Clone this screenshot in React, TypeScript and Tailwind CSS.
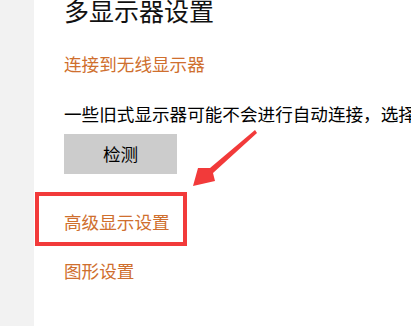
const cjk = { fontFamily: '"Microsoft YaHei", "Noto Sans CJK SC", sans-serif' };

export default function App() {
  return (
    <div className="relative flex h-screen w-full overflow-hidden bg-white" style={cjk}>
      <aside className="w-[34px] shrink-0 bg-[#f2f2f2]" />
      <main className="flex flex-col pl-[30px] text-black">
        <h1 className="h-[20px] whitespace-nowrap text-[25px] font-normal leading-[20px] text-[#111]">
          多显示器设置
        </h1>
        <a className="mt-[32px] h-[24px] whitespace-nowrap text-[17.6px] leading-[24px] text-[#cf6f2e]">
          连接到无线显示器
        </a>
        <p className="mt-[26px] h-[24px] whitespace-nowrap text-[17.6px] leading-[24px]">
          一些旧式显示器可能不会进行自动连接，选择“检测”即可尝试手动连接。
        </p>
        <button className="mt-[8px] h-[40px] w-[113px] bg-[#cccccc] text-[17.6px] leading-[24px] text-black">
          检测
        </button>
        <div className="relative mt-[35.5px] h-[24px]">
          <div className="absolute left-[-29px] top-[-17.5px] h-[54px] w-[152px] border-[4px] border-[#f23a3a]" />
          <a className="whitespace-nowrap text-[17.6px] leading-[24px] text-[#cf6f2e]">高级显示设置</a>
        </div>
        <a className="mt-[25px] h-[24px] whitespace-nowrap text-[17.6px] leading-[24px] text-[#cf6f2e]">
          图形设置
        </a>
      </main>
      <svg className="pointer-events-none absolute left-0 top-0" width="411" height="326" viewBox="0 0 411 326">
        <polygon
          points="255,130 257,133 213,173 215,181 193,186 198,168 210,168"
          fill="#f23a3a"
        />
      </svg>
    </div>
  );
}
